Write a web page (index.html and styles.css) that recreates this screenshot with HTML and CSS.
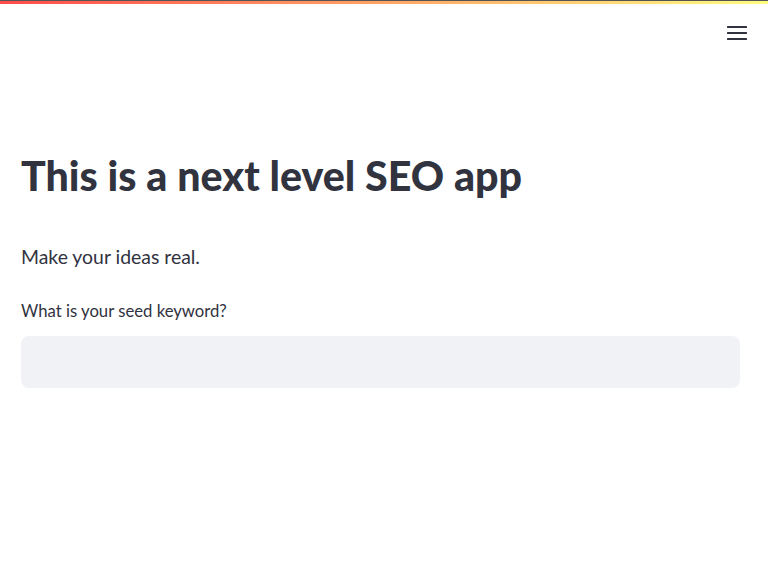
FILE: index.html
```html
<!DOCTYPE html>
<html>
<head>
<meta charset="utf-8">
<link rel="stylesheet" href="styles.css">
</head>
<body>
<div class="decoration"></div>
<header class="header">
  <button class="menu" aria-label="menu">
    <svg width="20" height="14" viewBox="0 0 20 14"><rect x="0" y="0" width="20" height="2" rx="0.5"/><rect x="0" y="6" width="20" height="2" rx="0.5"/><rect x="0" y="12" width="20" height="2" rx="0.5"/></svg>
  </button>
</header>
<main class="main">
  <h1 class="title">This is a next level SEO app</h1>
  <p class="lead">Make your ideas real.</p>
  <label class="label" for="kw">What is your seed keyword?</label>
  <input class="input" id="kw" type="text">
</main>
</body>
</html>
```
FILE: styles.css
```css
html, body { margin: 0; padding: 0; background: #fff; }
body { font-family: "Lato", "Noto Sans", sans-serif; color: #31333f; }
.decoration {
  height: 3px;
  border-top: 1px solid #555;
  background: linear-gradient(90deg, #ff4b4b, #fffd80);
}
.header { display: flex; justify-content: flex-end; padding: 22px 21px 0 0; height: 30px; }
.menu { border: 0; background: none; padding: 0; width: 20px; height: 14px; fill: #31333f; }
.menu svg { display: block; }
.main { padding: 0 28px 0 21px; }
.title { margin: 93px 0 0; font-size: 41.2px; font-weight: 900; line-height: 52px; letter-spacing: 0; }
.lead { margin: 42px 0 0; font-size: 19.4px; line-height: 28px; }
.label { display: block; margin-top: 28px; font-size: 16.7px; line-height: 24px; }
.input { display: block; box-sizing: border-box; margin-top: 13px; width: 719px; height: 52px; border: 0; border-radius: 8px; background: #f0f2f6; outline: none; }
```
